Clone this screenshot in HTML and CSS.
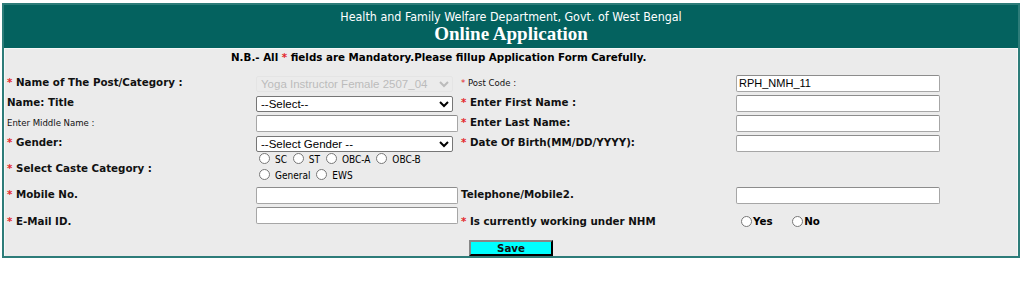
FILE: index.html
```html
<!DOCTYPE html>
<html lang="en">
<head>
    <meta charset="UTF-8">
    <title>Online Application</title>
    <link rel="stylesheet" href="styles.css">
</head>
<body>
    <div class="wrap">
        <div class="head">
            <div class="dept">Health and Family Welfare Department, Govt. of West Bengal</div>
            <div class="title">Online Application</div>
        </div>
        <div class="panel">
            <div class="note">N.B.- All <span class="req">*</span> fields are Mandatory.Please fillup Application Form Carefully.</div>
            <form id="app-form">
            <table class="form">
                <tr class="row">
                    <td class="c1 lbl"><span class="req">*</span> Name of The Post/Category :</td>
                    <td class="c2">
                        <select class="sel" disabled><option>Yoga Instructor Female 2507_04</option></select>
                    </td>
                    <td class="c3 small"><span class="req">*</span> Post Code :</td>
                    <td class="c4"><input type="text" class="txt" value="RPH_NMH_11"></td>
                </tr>
                <tr class="row">
                    <td class="c1 lbl">Name: Title</td>
                    <td class="c2">
                        <select class="sel"><option>--Select--</option></select>
                    </td>
                    <td class="c3 lbl"><span class="req">*</span> Enter First Name :</td>
                    <td class="c4"><input type="text" class="txt"></td>
                </tr>
                <tr class="row">
                    <td class="c1 small">Enter Middle Name :</td>
                    <td class="c2"><input type="text" class="txt wide"></td>
                    <td class="c3 lbl"><span class="req">*</span> Enter Last Name:</td>
                    <td class="c4"><input type="text" class="txt"></td>
                </tr>
                <tr class="row">
                    <td class="c1 lbl"><span class="req">*</span> Gender:</td>
                    <td class="c2">
                        <select class="sel"><option>--Select Gender --</option></select>
                    </td>
                    <td class="c3 lbl"><span class="req">*</span> Date Of Birth(MM/DD/YYYY):</td>
                    <td class="c4"><input type="text" class="txt"></td>
                </tr>
                <tr class="row-caste">
                    <td class="c1 lbl"><span class="req">*</span> Select Caste Category :</td>
                    <td class="c2 radios">
                        <div class="rline">
                            <label><input type="radio" name="caste">SC</label>
                            <label><input type="radio" name="caste">ST</label>
                            <label><input type="radio" name="caste">OBC-A</label>
                            <label><input type="radio" name="caste">OBC-B</label>
                        </div>
                        <div class="rline">
                            <label><input type="radio" name="caste">General</label>
                            <label><input type="radio" name="caste">EWS</label>
                        </div>
                    </td>
                    <td class="c3"></td>
                    <td class="c4"></td>
                </tr>
                <tr class="row-mob">
                    <td class="c1 lbl"><span class="req">*</span> Mobile No.</td>
                    <td class="c2"><input type="text" class="txt wide"></td>
                    <td class="c3 lbl">Telephone/Mobile2.</td>
                    <td class="c4"><input type="text" class="txt"></td>
                </tr>
                <tr class="row-mail">
                    <td class="c1 lbl"><span class="req">*</span> E-Mail ID.</td>
                    <td class="c2 top"><input type="text" class="txt wide"></td>
                    <td class="c3 lbl"><span class="req">*</span> Is currently working under NHM</td>
                    <td class="c4 yesno">
                        <label><input type="radio" name="nhm">Yes</label>
                        <label><input type="radio" name="nhm">No</label>
                    </td>
                </tr>
                <tr class="row-save">
                    <td colspan="4" class="save-cell"><button type="submit" class="save">Save</button></td>
                </tr>
            </table>
            </form>
        </div>
    </div>
</body>
</html>
```

FILE: styles.css
```css
body {
    margin: 0;
    padding: 0;
    background: #fff;
    font-family: "DejaVu Sans", Verdana, sans-serif;
}
.wrap {
    margin: 3px 4px 0 2px;
    border: 2px solid #2d7c79;
}
.head {
    background-color: #04625f;
    color: #fff;
    text-align: center;
    padding: 5px 0 4px;
}
.dept {
    font-family: "DejaVu Sans", sans-serif;
    font-stretch: condensed;
    font-size: 12.4px;
    line-height: 14px;
}
.title {
    font-family: "Liberation Serif", serif;
    font-weight: bold;
    font-size: 19px;
    line-height: 20px;
}
.panel {
    background-color: #ebebeb;
    border: 1px solid #f7f7f7;
    border-bottom: 0;
}
.note {
    text-align: left;
    padding-left: 226px;
    font-weight: bold;
    font-size: 10.3px;
    line-height: 17px;
    margin-bottom: 6px;
}
.req {
    color: #e3262b;
}
.form {
    width: 100%;
    border-collapse: collapse;
    table-layout: fixed;
}
.form td {
    padding: 0;
    vertical-align: middle;
}
.row td {
    height: 20px;
}
.row-caste td {
    height: 32px;
}
.row-mob td {
    height: 18px;
}
.row-mail td {
    height: 34px;
}
.row-save td {
    height: 16px;
}
.c1 {
    width: 247px;
    padding-left: 2px !important;
}
.c2 {
    width: 202px;
    padding-left: 2px !important;
}
.c3 {
    width: 271px;
    padding-left: 3px !important;
}
.c4 {
    padding-left: 4px !important;
}
.lbl {
    font-weight: bold;
    font-size: 10.3px;
    color: #111;
}
.small {
    font-stretch: condensed;
    font-size: 9.5px;
    color: #111;
}
.sel {
    width: 197px;
    height: 16px;
    font-family: "Liberation Sans", Arial, sans-serif;
    font-size: 11.5px;
    border: 1px solid #767676;
    border-radius: 2px;
    background: #fff;
    padding: 0;
    color: #000;
}
.sel:disabled {
    color: #a8a8a8;
    border-color: #e2e2e2;
    background: #ececec;
}
.txt {
    box-sizing: border-box;
    width: 204px;
    height: 17px;
    font-family: "Liberation Sans", Arial, sans-serif;
    font-size: 11px;
    border: 1px solid #a6a6a6;
    border-top-color: #8c8c8c;
    border-radius: 2px;
    padding: 0 2px;
    margin: 0;
    background: #fff;
}
.txt.wide {
    width: 202px;
}
.top {
    vertical-align: top !important;
    padding-top: 1px !important;
}
.radios {
    font-stretch: condensed;
    font-size: 10px;
}
.rline {
    line-height: 16px;
    height: 16px;
}
input[type="radio"] {
    width: 11px;
    height: 11px;
    margin: 0 5px 0 3px;
    vertical-align: -1px;
}
.yesno {
    font-weight: bold;
    font-size: 10.3px;
}
.yesno label {
    margin-right: 11px;
}
.yesno input[type="radio"] {
    margin: 0 1px 0 5px;
    vertical-align: -2px;
}
.save-cell {
    text-align: center;
    padding-top: 1px !important;
    vertical-align: top !important;
}
.save {
    display: block;
    margin: 0 auto;
    width: 84px;
    height: 16px;
    background-color: #00ffff;
    border: 2px outset #333;
    font-family: "DejaVu Sans", sans-serif;
    font-weight: bold;
    font-size: 10.3px;
    line-height: 12px;
    padding: 0;
    color: #111;
    cursor: pointer;
}
```
